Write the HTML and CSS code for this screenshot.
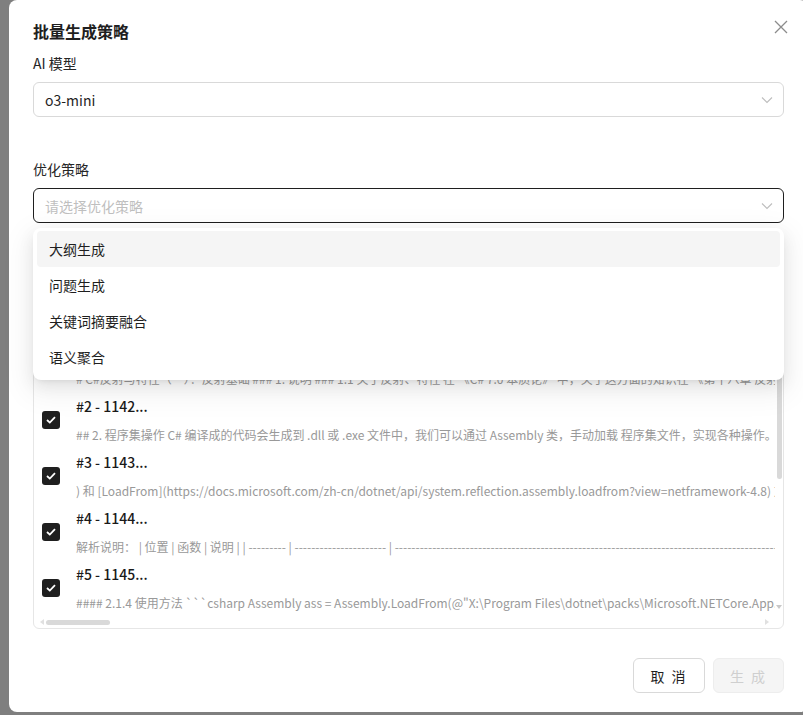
FILE: index.html
```html
<!DOCTYPE html>
<html lang="zh-CN">
<head>
    <meta charset="UTF-8">
    <title>批量生成策略</title>
    <link rel="stylesheet" href="styles.css">
</head>
<body>
    <div class="modal">
        <div class="modal-header">
            <div class="modal-title">批量生成策略</div>
            <svg class="close" width="14" height="14" viewBox="0 0 14 14">
                <path d="M1 1L13 13M13 1L1 13" stroke="#8c8c8c" stroke-width="1.3" fill="none"/>
            </svg>
        </div>

        <div class="label">AI 模型</div>
        <div class="select">
            <span class="value">o3-mini</span>
            <svg class="arrow" width="12" height="8" viewBox="0 0 12 8"><path d="M1 1.5L6 6.5L11 1.5" stroke="#bdbdbd" stroke-width="1.1" fill="none"/></svg>
        </div>

        <div class="label label-gap">优化策略</div>
        <div class="select-wrap">
            <div class="select focused">
                <span class="placeholder">请选择优化策略</span>
                <svg class="arrow" width="12" height="8" viewBox="0 0 12 8"><path d="M1 1.5L6 6.5L11 1.5" stroke="#bdbdbd" stroke-width="1.1" fill="none"/></svg>
            </div>
            <div class="dropdown">
                <div class="option active">大纲生成</div>
                <div class="option">问题生成</div>
                <div class="option">关键词摘要融合</div>
                <div class="option">语义聚合</div>
            </div>
        </div>

        <div class="list-box">
            <div class="list-main">
                <div class="list-scroll">
                    <div class="item">
                        <span class="checkbox"><svg width="10" height="8" viewBox="0 0 10 8"><path d="M1 4L3.8 6.6L9 1.2" stroke="#fff" stroke-width="1.8" fill="none"/></svg></span>
                        <div class="item-body">
                            <div class="item-title">#1 - 1141...</div>
                            <div class="item-desc"># C#反射与特性（一）：反射基础 ### 1. 说明 ### 1.1 关于反射、特性 在 《C# 7.0 本质论》 中，关于这方面的知识在 《第十八章 反射、特性和动态编程》</div>
                        </div>
                    </div>
                    <div class="item">
                        <span class="checkbox"><svg width="10" height="8" viewBox="0 0 10 8"><path d="M1 4L3.8 6.6L9 1.2" stroke="#fff" stroke-width="1.8" fill="none"/></svg></span>
                        <div class="item-body">
                            <div class="item-title">#2 - 1142...</div>
                            <div class="item-desc">## 2. 程序集操作 C# 编译成的代码会生成到 .dll 或 .exe 文件中，我们可以通过 Assembly 类，手动加载 程序集文件，实现各种操作。</div>
                        </div>
                    </div>
                    <div class="item">
                        <span class="checkbox"><svg width="10" height="8" viewBox="0 0 10 8"><path d="M1 4L3.8 6.6L9 1.2" stroke="#fff" stroke-width="1.8" fill="none"/></svg></span>
                        <div class="item-body">
                            <div class="item-title">#3 - 1143...</div>
                            <div class="item-desc">) 和 [LoadFrom](https://docs.microsoft.com/zh-cn/dotnet/api/system.reflection.assembly.loadfrom?view=netframework-4.8) 方法</div>
                        </div>
                    </div>
                    <div class="item">
                        <span class="checkbox"><svg width="10" height="8" viewBox="0 0 10 8"><path d="M1 4L3.8 6.6L9 1.2" stroke="#fff" stroke-width="1.8" fill="none"/></svg></span>
                        <div class="item-body">
                            <div class="item-title">#4 - 1144...</div>
                            <div class="item-desc">解析说明： | 位置 | 函数 | 说明 | | --------- | ---------------------- | ------------------------------------------------------------------------------------------------</div>
                        </div>
                    </div>
                    <div class="item">
                        <span class="checkbox"><svg width="10" height="8" viewBox="0 0 10 8"><path d="M1 4L3.8 6.6L9 1.2" stroke="#fff" stroke-width="1.8" fill="none"/></svg></span>
                        <div class="item-body">
                            <div class="item-title">#5 - 1145...</div>
                            <div class="item-desc">#### 2.1.4 使用方法 ```csharp Assembly ass = Assembly.LoadFrom(@"X:\Program Files\dotnet\packs\Microsoft.NETCore.App.Ref\3.1.0\ref\netcoreapp3.1\System.dll");</div>
                        </div>
                    </div>
                </div>
                <div class="vbar">
                    <div class="vtrack"><div class="vthumb"></div></div>
                    <span class="tri-down"></span>
                </div>
            </div>
            <div class="hbar">
                <span class="tri-left"></span>
                <div class="hthumb"></div>
                <div class="hspace"></div>
                <span class="tri-right"></span>
            </div>
        </div>

        <div class="footer">
            <button class="btn">取 消</button>
            <button class="btn disabled">生 成</button>
        </div>
    </div>
</body>
</html>
```

FILE: styles.css
```css
body {
    margin: 0;
    background-color: #7f7f7f;
    font-family: "Noto Sans CJK SC", "Noto Sans", sans-serif;
    color: #1f1f1f;
    overflow: hidden;
    height: 715px;
}
.modal {
    margin-left: 9px;
    width: 799px;
    height: 712px;
    box-sizing: border-box;
    background-color: white;
    border-radius: 8px;
    padding: 19px 24px 0 24px;
}
.modal-header {
    display: flex;
    align-items: center;
    justify-content: space-between;
    height: 24px;
    margin-bottom: 9px;
}
.modal-title {
    font-size: 16px;
    font-weight: bold;
    line-height: 24px;
}
.close {
    margin-right: -4px;
    margin-top: -8px;
}
.label {
    font-size: 14px;
    line-height: 22px;
    color: #262626;
    margin-bottom: 8px;
}
.label-gap {
    margin-top: 41px;
}
.select {
    display: flex;
    align-items: center;
    justify-content: space-between;
    height: 35px;
    box-sizing: border-box;
    border: 1px solid #d9d9d9;
    border-radius: 6px;
    padding: 0 10px 0 11px;
    font-size: 14px;
}
.select.focused {
    border-color: #1f1f1f;
}
.placeholder {
    color: #bfbfbf;
}
.select-wrap {
    position: relative;
}
.dropdown {
    position: absolute;
    top: 40px;
    left: 0;
    right: 0;
    z-index: 10;
    background-color: white;
    border-radius: 8px;
    padding: 3px 4px 5px 4px;
    box-shadow: 0 6px 16px 0 rgba(0, 0, 0, 0.08), 0 3px 6px -4px rgba(0, 0, 0, 0.12), 0 9px 28px 8px rgba(0, 0, 0, 0.05);
}
.option {
    height: 36px;
    line-height: 36px;
    padding: 0 12px;
    font-size: 14px;
    border-radius: 4px;
    color: #1f1f1f;
}
.option.active {
    background-color: #f5f5f5;
}
.list-box {
    margin-top: 97px;
    height: 309px;
    box-sizing: border-box;
    border: 1px solid #e6e6e6;
    border-radius: 6px;
    display: flex;
    flex-direction: column;
}
.list-main {
    flex: 1;
    display: flex;
    min-height: 0;
}
.list-scroll {
    flex: 1;
    overflow: hidden;
    padding: 18px 0 0 8px;
    display: flex;
    flex-direction: column;
    gap: 6px;
}
.item {
    display: flex;
    align-items: center;
    gap: 16px;
}
.checkbox {
    flex: none;
    width: 18px;
    height: 18px;
    border-radius: 3px;
    background-color: #1f1f1f;
    display: flex;
    align-items: center;
    justify-content: center;
}
.item-body {
    min-width: 0;
}
.item-title {
    font-size: 14px;
    line-height: 22px;
    font-weight: 500;
    color: #1a1a1a;
}
.item-desc {
    margin-top: 8px;
    font-size: 12px;
    line-height: 20px;
    color: #999;
    white-space: nowrap;
}
.vbar {
    width: 8px;
    display: flex;
    flex-direction: column;
    align-items: center;
    padding-bottom: 8px;
}
.vtrack {
    flex: 1;
    width: 100%;
    padding-top: 20px;
}
.vthumb {
    width: 5px;
    margin: 0 auto;
    height: 138px;
    border-radius: 3px;
    background-color: #d9d9d9;
}
.tri-down {
    border-left: 3px solid transparent;
    border-right: 3px solid transparent;
    border-top: 4px solid #c8c8c8;
}
.hbar {
    height: 10px;
    display: flex;
    align-items: center;
    padding: 0 14px 0 6px;
    margin-bottom: 1px;
}
.tri-left {
    border-top: 3px solid transparent;
    border-bottom: 3px solid transparent;
    border-right: 4px solid #e0e0e0;
    margin-right: 2px;
}
.hthumb {
    width: 64px;
    height: 5px;
    border-radius: 3px;
    background-color: #d9d9d9;
}
.hspace {
    flex: 1;
}
.tri-right {
    border-top: 3px solid transparent;
    border-bottom: 3px solid transparent;
    border-left: 4px solid #e0e0e0;
}
.footer {
    display: flex;
    justify-content: flex-end;
    gap: 8px;
    margin-top: 29px;
}
.btn {
    width: 72px;
    height: 35px;
    border: 1px solid #d9d9d9;
    border-radius: 6px;
    background-color: white;
    font-family: inherit;
    font-size: 14px;
    color: #1f1f1f;
    letter-spacing: 2px;
}
.btn.disabled {
    width: 71px;
    background-color: #f5f5f5;
    border-color: #ededed;
    color: #cfcfcf;
}
```
